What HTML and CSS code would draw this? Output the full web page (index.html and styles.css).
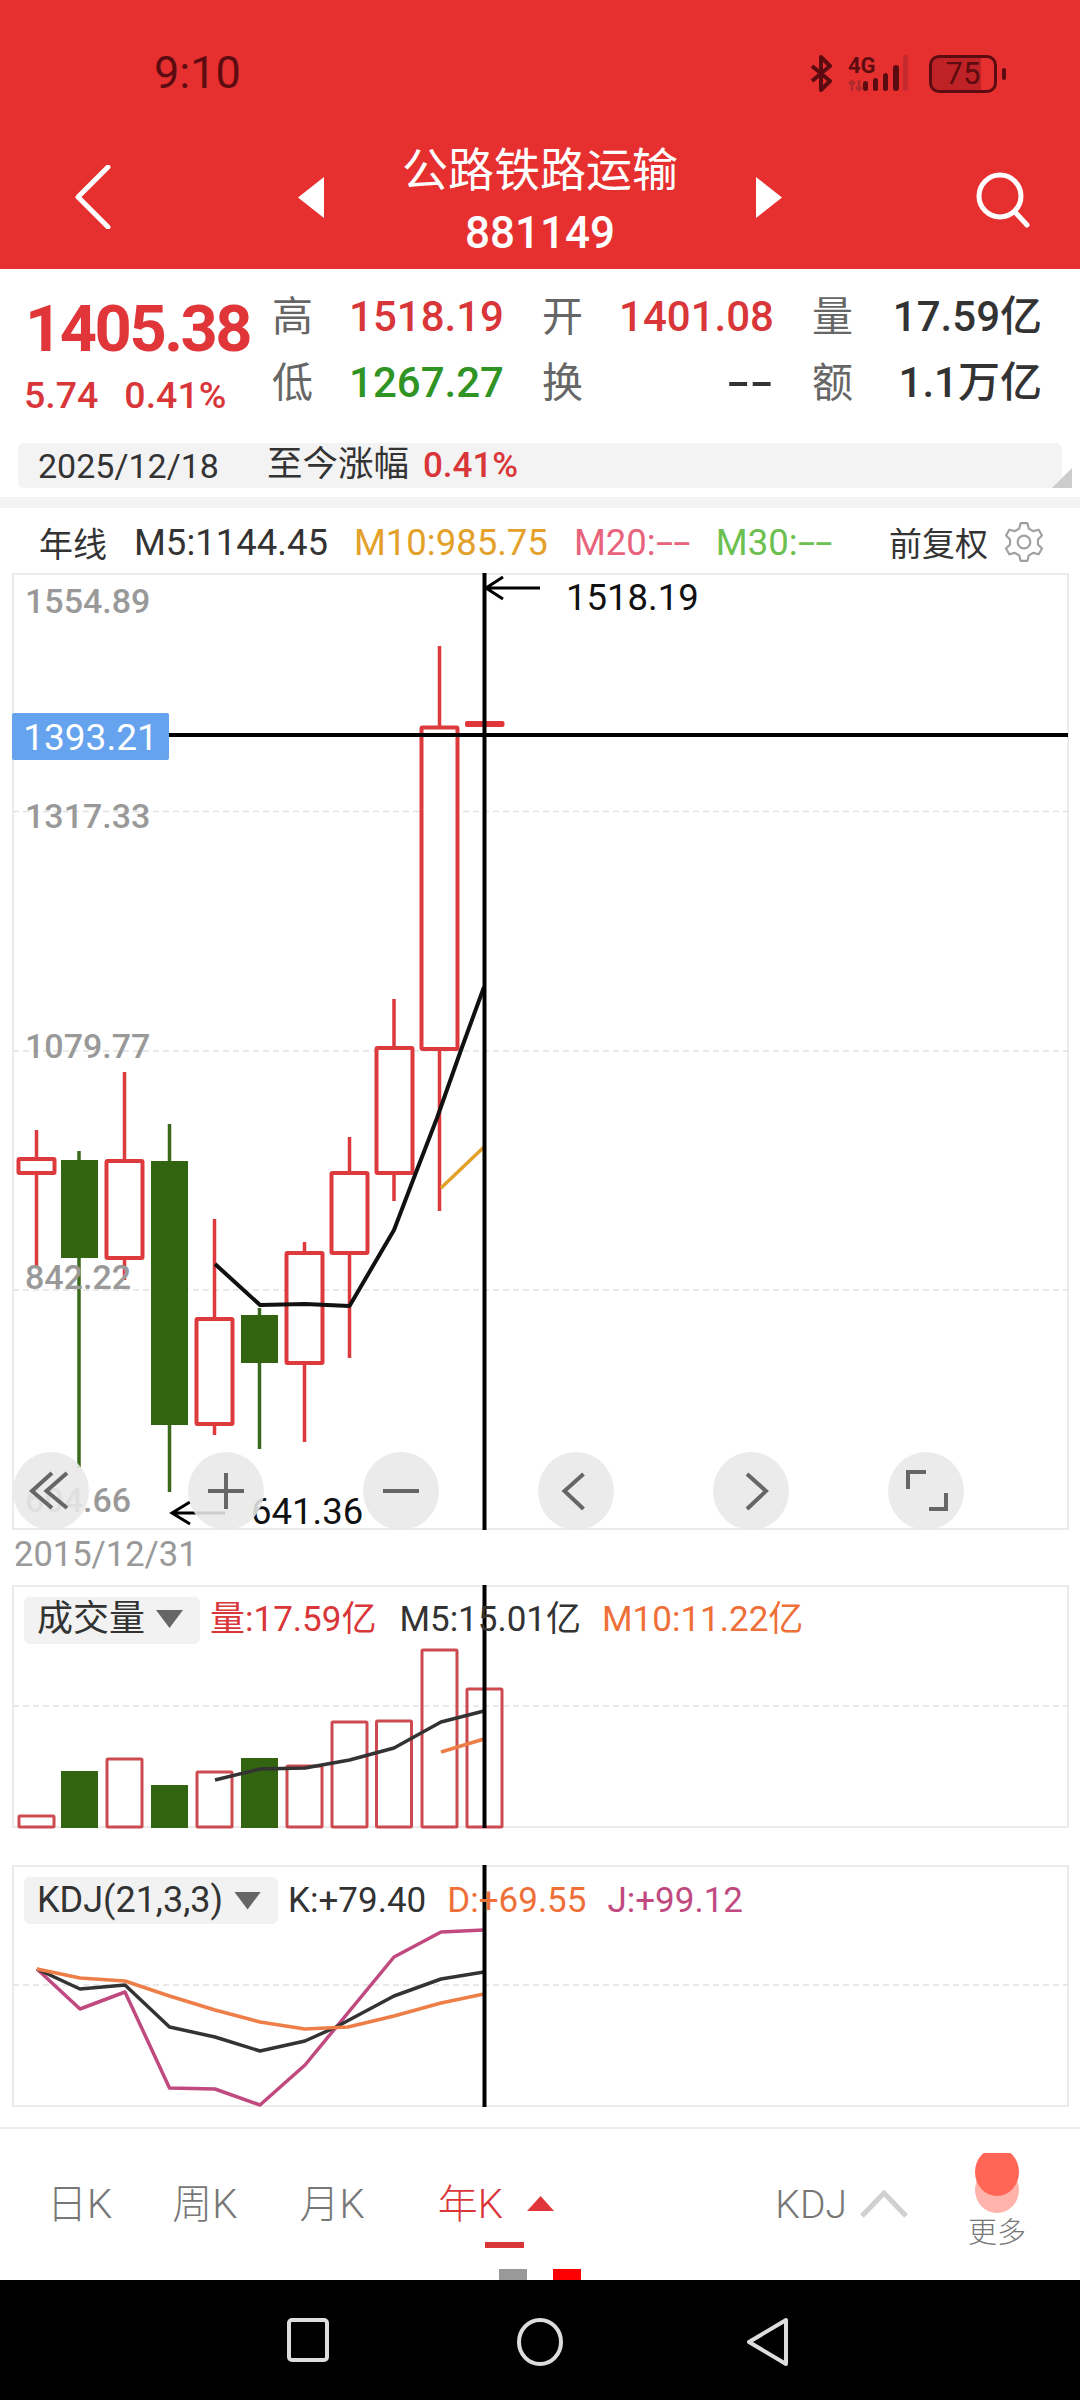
FILE: index.html
```html
<!DOCTYPE html>
<html lang="zh-CN">
<head>
    <meta charset="UTF-8">
    <meta name="viewport" content="width=device-width, initial-scale=1.0">
    <title>公路铁路运输 881149</title>
    <link rel="stylesheet" href="styles.css">
</head>
<body>

    <!-- Red header -->
    <header class="head">
        <div class="status">
            <div class="clock">9:10</div>
            <div class="status-icons">
                <svg class="bt" width="23" height="37" viewBox="0 0 23 37">
                    <path d="M2 11 L20 26 L11 35 V2 L20 11 L2 26"/>
                </svg>
                <svg class="net" width="67" height="45" viewBox="0 -8 67 45">
                    <text x="0" y="18">4G</text>
                    <path class="faint" d="M4 36 V26 M1 29 L4 26 L7 29 M11 25 V34 M8 32 L11 35 L14 32"/>
                    <rect x="15" y="26" width="5" height="10" rx="2.5"/>
                    <rect x="25" y="23" width="5" height="13" rx="2.5"/>
                    <rect x="35" y="18" width="5" height="18" rx="2.5"/>
                    <rect x="45" y="10" width="6" height="26" rx="3"/>
                    <rect class="faint-bar" x="55" y="0" width="5" height="36" rx="2"/>
                </svg>
                <div class="battery">75</div>
            </div>
        </div>
        <div class="nav">
            <svg class="back" width="36" height="64" viewBox="0 0 36 64">
                <path d="M33 2 L3 32 L33 62"/>
            </svg>
            <div class="title-group">
                <span class="tri-left"></span>
                <div class="title">
                    <div>公路铁路运输</div>
                    <div>881149</div>
                </div>
                <span class="tri-right"></span>
            </div>
            <svg class="search" width="56" height="56" viewBox="0 0 56 56">
                <circle cx="25" cy="24" r="21"/>
                <path d="M40 40 L52 53"/>
            </svg>
        </div>
    </header>

    <!-- Quote block -->
    <section class="quote">
        <div class="quote-top">
            <div class="price-box">
                <div class="price">1405.38</div>
                <div class="change"><span>5.74</span><span>0.41%</span></div>
            </div>
            <div class="quote-grid">
                <span class="q-label">高</span><span class="q-val red">1518.19</span>
                <span class="q-label">开</span><span class="q-val red">1401.08</span>
                <span class="q-label">量</span><span class="q-val">17.59亿</span>
                <span class="q-label">低</span><span class="q-val green">1267.27</span>
                <span class="q-label">换</span><span class="q-val"><span class="dash-r">--</span></span>
                <span class="q-label">额</span><span class="q-val">1.1万亿</span>
            </div>
        </div>
        <div class="date-bar">
            <span class="bar-date">2025/12/18</span>
            <span class="bar-label">至今涨幅</span>
            <span class="bar-pct">0.41%</span>
        </div>
    </section>
    <div class="divider"></div>

    <!-- MA legend -->
    <div class="ma-row">
        <span class="ma-name">年线</span>
        <span class="c-dark">M5:1144.45</span>
        <span class="c-yellow">M10:985.75</span>
        <span class="c-pink">M20:<span class="dash">--</span></span>
        <span class="c-lime">M30:<span class="dash">--</span></span>
        <span class="adjust">前复权</span>
        <svg class="gear" width="40" height="40" viewBox="0 0 24 24">
            <path d="M14 .67 L14.9 4 L17.46 5.49 L20.81 4.61 L22.8 8.07 L20.37 10.52 V13.48 L22.8 15.93 L20.81 19.39 L17.46 18.51 L14.9 20 L14 23.33 H10 L9.1 20 L6.54 18.51 L3.19 19.39 L1.2 15.93 L3.63 13.48 V10.52 L1.2 8.07 L3.19 4.61 L6.54 5.49 L9.1 4 L10 .67 Z"/>
            <circle cx="12" cy="12" r="3.8"/>
        </svg>
    </div>

    <!-- Candle chart -->
    <div class="pane pane-main">
        <svg class="chart" width="1080" height="958" viewBox="0 573 1080 958">
            <rect class="frame" x="13" y="574" width="1055" height="955"/>
            <path class="grid" d="M13 811.5 H1068 M13 1051 H1068 M13 1290 H1068"/>

            <path class="wick-up" d="M36.5 1130 V1159 M36.5 1173 V1267 M124.5 1072 V1161 M124.5 1258 V1280 M214.5 1219 V1319 M214.5 1424 V1435 M304.5 1242 V1253 M304.5 1363 V1442 M349.5 1137 V1173 M349.5 1253 V1358 M394 999 V1048 M394 1173 V1201 M439.5 646 V727 M439.5 1049 V1211"/>
            <path class="wick-down" d="M79 1151 V1468 M169.5 1124 V1492 M259.5 1308 V1449"/>

            <rect class="body-up" x="18.5" y="1159" width="36" height="14" rx="1"/>
            <rect class="body-down" x="61" y="1160" width="37" height="98"/>
            <rect class="body-up" x="106.5" y="1161" width="36" height="97" rx="1"/>
            <rect class="body-down" x="151" y="1161" width="37" height="264"/>
            <rect class="body-up" x="196.5" y="1319" width="36" height="105" rx="1"/>
            <rect class="body-down" x="241" y="1315" width="37" height="48"/>
            <rect class="body-up" x="286.5" y="1253" width="36" height="110" rx="1"/>
            <rect class="body-up" x="331.5" y="1173" width="36" height="80" rx="1"/>
            <rect class="body-up" x="376.5" y="1048" width="36" height="125" rx="1"/>
            <rect class="body-up" x="421.5" y="727.5" width="36" height="321.5" rx="1"/>
            <rect class="doji" x="465" y="721" width="39.5" height="6" rx="2"/>

            <polyline class="line-black" points="215,1264 260,1305 305,1304 349.5,1306 394,1230 415,1175 437,1118 461,1050 484,987"/>
            <polyline class="line-yellow" points="441,1188 484,1147"/>

            <path class="cross" d="M484.5 573 V1530 M169 735 H1068"/>

            <text class="axis" x="25" y="613">1554.89</text>
            <text class="axis" x="25" y="828">1317.33</text>
            <text class="axis" x="25" y="1058">1079.77</text>
            <text class="axis" x="25" y="1289">842.22</text>
            <text class="axis" x="25" y="1512">604.66</text>

            <path class="arrow" d="M540 588 H486 M503 577 L486 588 L503 599"/>
            <text class="mark" x="566" y="610">1518.19</text>
            <path class="arrow" d="M225 1513 H172 M190 1502 L172 1513 L190 1524"/>
            <text class="mark" x="251" y="1524">641.36</text>
        </svg>

        <div class="price-tag">1393.21</div>

        <div class="chart-btns">
            <div class="chart-btn">
                <svg width="76" height="78" viewBox="0 0 76 78"><path d="M39 21 L19 39 L39 56 M54 21 L33.5 39 L54 56"/></svg>
            </div>
            <div class="chart-btn">
                <svg width="76" height="78" viewBox="0 0 76 78"><path d="M20 39 H56 M38 21 V57"/></svg>
            </div>
            <div class="chart-btn">
                <svg width="76" height="78" viewBox="0 0 76 78"><path d="M20 39 H56"/></svg>
            </div>
            <div class="chart-btn">
                <svg width="76" height="78" viewBox="0 0 76 78"><path d="M45.5 22 L26.5 39 L45.5 57"/></svg>
            </div>
            <div class="chart-btn">
                <svg width="76" height="78" viewBox="0 0 76 78"><path d="M34 22 L53 39 L34 57"/></svg>
            </div>
            <div class="chart-btn">
                <svg width="76" height="78" viewBox="0 0 76 78"><path d="M20 37 V20 H38 M58 41 V57 H41"/></svg>
            </div>
        </div>
    </div>
    <div class="date-row">2015/12/31</div>

    <!-- Volume -->
    <div class="pane pane-vol">
        <svg class="chart" width="1080" height="244" viewBox="0 1585 1080 244">
            <rect class="frame" x="13" y="1586" width="1055" height="241"/>
            <path class="grid" d="M13 1706 H1068"/>

            <rect class="vol-up" x="19" y="1816" width="35" height="11" rx="1"/>
            <rect class="vol-down" x="61" y="1771" width="37" height="57"/>
            <rect class="vol-up" x="107" y="1759" width="35" height="68" rx="1"/>
            <rect class="vol-down" x="151" y="1785" width="37" height="43"/>
            <rect class="vol-up" x="197" y="1772" width="35" height="55" rx="1"/>
            <rect class="vol-down" x="241" y="1758" width="37" height="70"/>
            <rect class="vol-up" x="287" y="1766" width="35" height="61" rx="1"/>
            <rect class="vol-up" x="332" y="1722" width="35" height="105" rx="1"/>
            <rect class="vol-up" x="376.5" y="1721" width="35" height="106" rx="1"/>
            <rect class="vol-up" x="422" y="1650" width="35" height="177" rx="1"/>
            <rect class="vol-up" x="467" y="1689" width="35" height="138" rx="1"/>

            <polyline class="line-dark" points="215,1780 260,1769 305,1768 349.5,1760 394,1748 441,1722 484,1711"/>
            <polyline class="line-orange" points="441,1752 484,1739"/>
            <path class="cross" d="M484.5 1585 V1828"/>
        </svg>
        <div class="legend">
            <div class="picker">成交量<span class="picker-tri"></span></div>
            <span class="c-red leg-first">量:17.59亿</span>
            <span class="c-dark">M5:15.01亿</span>
            <span class="c-orange">M10:11.22亿</span>
        </div>
    </div>

    <!-- KDJ -->
    <div class="pane pane-kdj">
        <svg class="chart" width="1080" height="242" viewBox="0 1865 1080 242">
            <rect class="frame" x="13" y="1866" width="1055" height="240"/>
            <path class="grid" d="M13 1985 H1068"/>
            <polyline class="line-magenta" points="37,1969 80,2009 125,1992 169.5,2088 215,2089 260,2105 305,2065 394,1957 441,1932 484,1930"/>
            <polyline class="line-dark" points="37,1969 80,1989 125,1985 169.5,2027 215,2037 260,2051 305,2041 336,2027 394,1996 441,1979 484,1972"/>
            <polyline class="line-orange" points="37,1969 80,1978 125,1981 169.5,1996 215,2010 260,2022 305,2029 348,2027 394,2016 441,2003 484,1994"/>
            <path class="cross" d="M484.5 1865 V2107"/>
        </svg>
        <div class="legend">
            <div class="picker">KDJ(21,3,3)<span class="picker-tri"></span></div>
            <span class="c-dark leg-first">K:+79.40</span>
            <span class="c-orange">D:+69.55</span>
            <span class="c-magenta">J:+99.12</span>
        </div>
    </div>

    <!-- Period tabs -->
    <div class="tabs">
        <span class="tab">日K</span>
        <span class="tab">周K</span>
        <span class="tab">月K</span>
        <span class="tab tab-active">年K</span>
        <span class="tab-tri"></span>
        <span class="tab tab-kdj">KDJ</span>
        <svg class="caret" width="50" height="28" viewBox="0 0 50 28"><path d="M3 26 L25 3 L47 26"/></svg>
        <div class="more">
            <svg width="44" height="60" viewBox="0 0 44 60">
                <ellipse class="blob-light" cx="22" cy="37" rx="22" ry="23"/>
                <ellipse class="blob-dark" cx="22" cy="19" rx="22" ry="24"/>
            </svg>
            <div class="more-text">更多</div>
        </div>
        <span class="sq sq-gray"></span>
        <span class="sq sq-red"></span>
    </div>

    <!-- Android nav bar -->
    <div class="sys-nav">
        <svg width="44" height="46" viewBox="0 0 44 46"><rect x="3" y="3" width="38" height="40" rx="3"/></svg>
        <svg width="48" height="50" viewBox="0 0 48 50"><ellipse cx="24" cy="25" rx="21" ry="22"/></svg>
        <svg class="sys-back" width="44" height="50" viewBox="0 0 44 50"><path d="M40 3 V47 L3 25 Z"/></svg>
    </div>

</body>
</html>
```

FILE: styles.css
```css
* {
    box-sizing: border-box;
}

body {
    margin: 0;
    width: 1080px;
    height: 2400px;
    overflow: hidden;
    display: flex;
    flex-direction: column;
    background: #fff;
    color: #333;
    font-family: Roboto, "Noto Sans CJK SC", sans-serif;
}

.red { color: #d9363a; }
.green { color: #2f9424; }
.c-red { color: #d9363a; }
.c-dark { color: #333; }
.c-yellow { color: #e3a12a; }
.c-pink { color: #e8637c; }
.c-lime { color: #6cc04f; }
.c-orange { color: #ee7038; }
.c-magenta { color: #c04a80; }

/* Header */
.head {
    height: 269px;
    background: #e63030;
    flex: none;
}
.status {
    height: 105px;
    padding: 0 83px 0 154px;
    display: flex;
    justify-content: space-between;
}
.clock {
    margin-top: 47px;
    font-size: 45px;
    line-height: 52px;
    color: #5c0c10;
}
.status-icons {
    margin-top: 55px;
    display: flex;
    align-items: flex-start;
}
.bt path {
    fill: none;
    stroke: #5c0c10;
    stroke-width: 4;
    stroke-linejoin: round;
}
.net {
    margin: -8px 0 0 15px;
    fill: #5c0c10;
}
.net text {
    font-size: 22px;
    font-weight: 700;
}
.net .faint {
    fill: none;
    stroke: #b02a2c;
    stroke-width: 2.5;
}
.net .faint-bar {
    fill: #c42a2c;
}
.battery {
    position: relative;
    margin-left: 14px;
    width: 68px;
    height: 38px;
    border: 3px solid #5c0c10;
    border-radius: 10px;
    background: linear-gradient(to right, rgba(120, 10, 20, 0.35) 79%, transparent 79%);
    color: #5c0c10;
    font-size: 31px;
    line-height: 32px;
    text-align: center;
}
.battery::after {
    content: "";
    position: absolute;
    right: -12px;
    top: 10px;
    width: 4px;
    height: 12px;
    border-radius: 2px;
    background: #5c0c10;
}

.nav {
    height: 164px;
    padding: 0 49px;
    display: grid;
    grid-template-columns: 1fr auto 1fr;
    align-items: start;
}
.back {
    margin: 60px 0 0 26px;
}
.back path {
    fill: none;
    stroke: #fff;
    stroke-width: 5;
    stroke-linecap: round;
    stroke-linejoin: round;
}
.title-group {
    display: flex;
    align-items: flex-start;
    gap: 78px;
}
.tri-left, .tri-right {
    width: 26px;
    height: 41px;
    margin-top: 72px;
    background: #fff;
}
.tri-left { clip-path: polygon(100% 0, 0 50%, 100% 100%); }
.tri-right { clip-path: polygon(0 0, 100% 50%, 0 100%); }
.title {
    width: 276px;
    margin-top: 34px;
    color: #fff;
    text-align: center;
    line-height: 63px;
    white-space: nowrap;
}
.title div:first-child {
    font-size: 46px;
}
.title div:last-child {
    font-size: 44px;
    font-weight: 500;
}
.search {
    justify-self: end;
    margin-top: 67px;
}
.search circle, .search path {
    fill: none;
    stroke: #fff;
    stroke-width: 5;
    stroke-linecap: round;
}

/* Quote */
.quote {
    height: 228px;
    flex: none;
    padding-top: 15px;
}
.quote-top {
    display: flex;
    height: 132px;
}
.price-box {
    width: 272px;
    padding-left: 24px;
    flex: none;
}
.price {
    font-size: 65px;
    line-height: 56px;
    margin-top: 17px;
    font-weight: 700;
    color: #e0363a;
    letter-spacing: -2.5px;
    margin-left: 1px;
    white-space: nowrap;
}
.change {
    margin-top: 11px;
    display: flex;
    gap: 26px;
    font-size: 37.5px;
    line-height: 54px;
    font-weight: 500;
    color: #d9363a;
}
.quote-grid {
    display: grid;
    grid-template-columns: 42px 152px 42px 152px 42px 150px;
    grid-auto-rows: 66px;
    column-gap: 38px;
    align-items: center;
    font-size: 42px;
}
.q-label {
    color: #666;
    font-size: 41px;
    line-height: 66px;
}
.q-val {
    justify-self: end;
    font-weight: 500;
    line-height: 66px;
    white-space: nowrap;
}
.dash-r {
    display: inline-block;
    transform: scaleX(1.65);
    transform-origin: right;
}
.date-bar {
    position: relative;
    margin: 27px 18px 0;
    height: 45px;
    padding-left: 20px;
    display: flex;
    align-items: center;
    background: #f3f3f3;
    border-radius: 6px;
    font-size: 34px;
    white-space: nowrap;
}
.date-bar::after {
    content: "";
    position: absolute;
    right: -10px;
    bottom: 0;
    width: 20px;
    height: 20px;
    background: #ccc;
    clip-path: polygon(100% 0, 100% 100%, 0 100%);
}
.bar-label {
    margin-left: 48px;
    font-size: 35.5px;
    line-height: 40px;
    padding-bottom: 3px;
}
.bar-pct {
    margin-left: 14px;
    font-size: 35px;
    font-weight: 500;
    color: #d9363a;
}

.divider {
    height: 11px;
    flex: none;
    background: #f3f3f3;
}

/* MA legend */
.ma-row {
    height: 65px;
    flex: none;
    padding: 3px 36px 0 39px;
    display: flex;
    align-items: center;
    gap: 26px;
    font-size: 36.5px;
    white-space: nowrap;
}
.ma-name {
    font-size: 34px;
    margin-right: 1px;
}
.dash {
    display: inline-block;
    transform: scaleX(1.7);
    transform-origin: left;
    margin-right: 14px;
}
.adjust {
    margin-left: auto;
    font-size: 33px;
}
.gear {
    margin-left: -10px;
}
.gear path, .gear circle {
    fill: none;
    stroke: #a0a0a0;
    stroke-width: 1.3;
    stroke-linejoin: round;
}

/* Chart panes */
.pane {
    position: relative;
    flex: none;
}
.pane-main { height: 957px; }
.pane-vol { height: 243px; margin-bottom: 37px; }
.pane-kdj { height: 242px; margin-bottom: 20px; }
.chart {
    display: block;
    overflow: visible;
}
.frame {
    fill: none;
    stroke: #ebebeb;
    stroke-width: 2;
}
.grid {
    fill: none;
    stroke: #e2e2e2;
    stroke-width: 1.5;
    stroke-dasharray: 6 4;
}
.wick-up, .wick-down {
    fill: none;
    stroke-width: 3.5;
}
.wick-up { stroke: #dd3a3e; }
.wick-down { stroke: #3a6a1c; }
.body-up {
    fill: #fff;
    stroke: #dd3a3e;
    stroke-width: 4;
}
.body-down { fill: #336410; }
.doji { fill: #e0363a; }
.line-black, .line-yellow, .line-dark, .line-orange, .line-magenta {
    fill: none;
    stroke-linejoin: round;
}
.line-black { stroke: #111; stroke-width: 4; }
.line-yellow { stroke: #e3a12a; stroke-width: 3.5; }
.line-dark { stroke: #333; stroke-width: 3.5; }
.line-orange { stroke: #ee7e48; stroke-width: 3.5; }
.line-magenta { stroke: #c04a80; stroke-width: 3.5; }
.cross {
    fill: none;
    stroke: #000;
    stroke-width: 4;
}
.axis {
    font-size: 34px;
    font-weight: 500;
    fill: #999;
}
.mark {
    font-size: 36.5px;
    fill: #111;
}
.arrow {
    fill: none;
    stroke: #000;
    stroke-width: 3;
}
.vol-up {
    fill: none;
    stroke: #cc4a50;
    stroke-width: 3;
}
.vol-down { fill: #336410; }

.price-tag {
    position: absolute;
    left: 12px;
    top: 140px;
    width: 157px;
    height: 47px;
    border-radius: 2px;
    background: #65a3ee;
    color: #fff;
    font-size: 37px;
    line-height: 49px;
    text-align: center;
}
.chart-btns {
    position: absolute;
    left: 13px;
    top: 879px;
    display: flex;
    gap: 99px;
}
.chart-btn {
    width: 76px;
    height: 78px;
    border-radius: 50%;
    background: rgba(232, 232, 232, 0.88);
}
.chart-btn svg {
    display: block;
}
.chart-btn path {
    fill: none;
    stroke: #666;
    stroke-width: 4;
}

.date-row {
    height: 55px;
    flex: none;
    padding: 6px 0 0 14px;
    font-size: 34.5px;
    line-height: 37px;
    color: #999;
}

.legend {
    position: absolute;
    left: 24px;
    top: 12px;
    display: flex;
    align-items: flex-start;
    gap: 23px;
    font-size: 35px;
    line-height: 47px;
    white-space: nowrap;
}
.picker {
    height: 47px;
    padding: 0 17px 0 13px;
    display: flex;
    align-items: center;
    gap: 11px;
    background: #f2f2f2;
    border-radius: 6px;
    font-size: 36px;
    color: #333;
}
.picker-tri {
    width: 27px;
    height: 18px;
    background: #666;
    clip-path: polygon(0 0, 100% 0, 50% 100%);
}
.leg-first {
    margin-left: -13px;
}
.pane-vol .legend {
    line-height: 45px;
}
.pane-vol .picker {
    padding-bottom: 3px;
}
.pane-vol .c-orange {
    margin-left: -2px;
}
.pane-kdj .legend {
    gap: 21px;
    font-size: 35px;
}
.pane-kdj .leg-first {
    margin-left: -11px;
}

/* Tabs */
.tabs {
    position: relative;
    height: 153px;
    flex: none;
    border-top: 2px solid #eee;
    padding: 53px 54px 0 47px;
    display: flex;
    align-items: flex-start;
    font-size: 40px;
    font-weight: 300;
    line-height: 46px;
    color: #777;
    white-space: nowrap;
}
.tab {
    margin-right: 60px;
}
.tab:nth-child(2) {
    margin-right: 62px;
}
.tab-active {
    position: relative;
    margin: 0 24px 0 13px;
    color: #d9363a;
}
.tab-active::after {
    content: "";
    position: absolute;
    left: 47px;
    top: 60px;
    width: 39px;
    height: 6px;
    background: #d9363a;
}
.tab-tri {
    width: 27px;
    height: 15px;
    margin-top: 14px;
    background: #e0363a;
    clip-path: polygon(50% 0, 100% 100%, 0 100%);
}
.tab-kdj {
    margin: 0 12px 0 auto;
    font-size: 39px;
}
.caret {
    margin: 8px 59px 0 0;
}
.caret path {
    fill: none;
    stroke: #d0d0d0;
    stroke-width: 5;
}
.more {
    width: 58px;
    margin-top: -29px;
    display: flex;
    flex-direction: column;
    align-items: center;
}
.more svg {
    display: block;
}
.blob-light { fill: #ffb3aa; }
.blob-dark { fill: #ff6656; }
.more-text {
    margin-top: 5px;
    font-size: 29px;
    line-height: 30px;
    color: #777;
}
.sq {
    position: absolute;
    bottom: 0;
    width: 28px;
    height: 11px;
}
.sq-gray {
    left: 499px;
    background: #999;
}
.sq-red {
    left: 553px;
    background: #f00;
}

/* System nav */
.sys-nav {
    flex: 1;
    background: #000;
    padding-left: 286px;
    padding-top: 37px;
    display: flex;
    align-items: flex-start;
    gap: 186px;
}
.sys-nav svg * {
    fill: none;
    stroke: #ddd;
    stroke-width: 4;
    stroke-linejoin: round;
}
.sys-back {
    margin-left: -4px;
}
```
